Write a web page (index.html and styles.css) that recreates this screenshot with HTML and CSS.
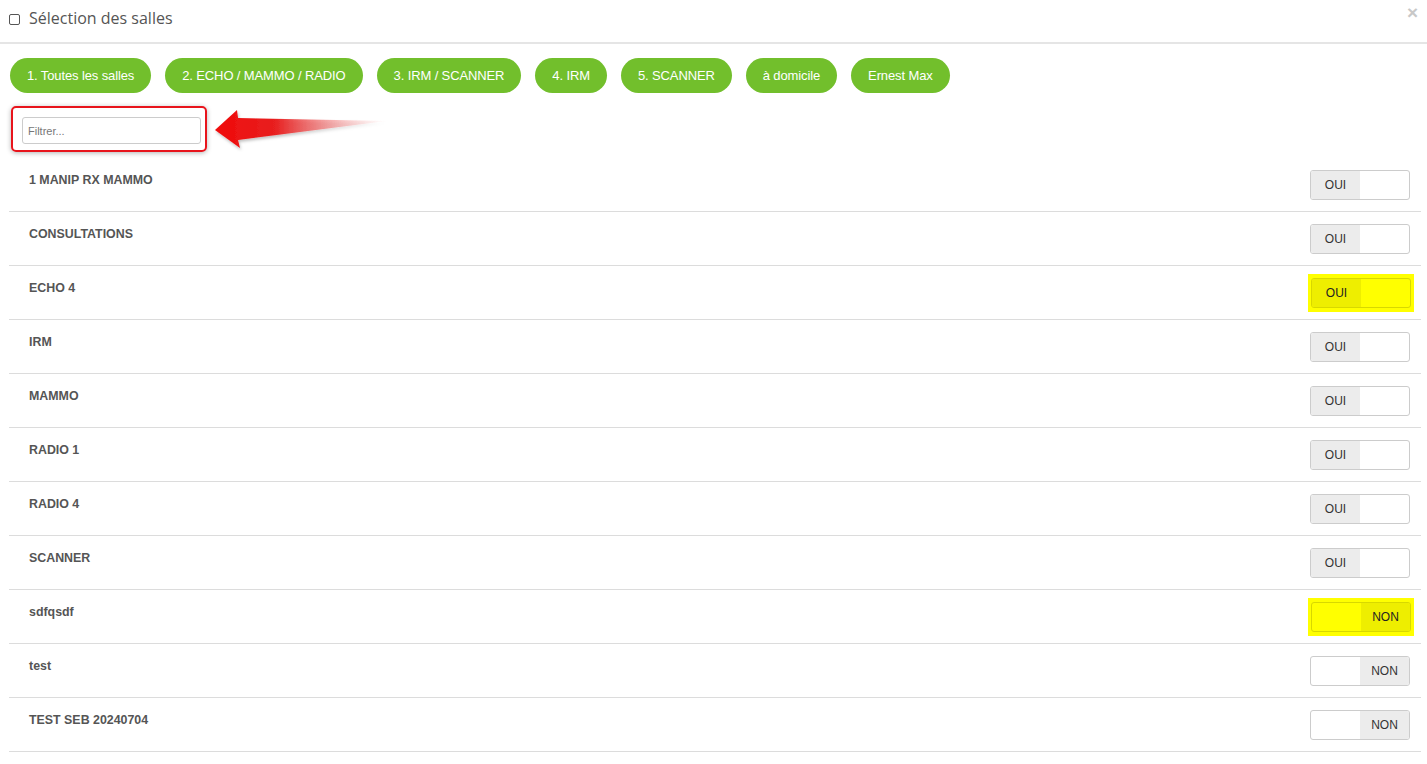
FILE: index.html
```html
<!DOCTYPE html>
<html lang="fr">
<head>
  <meta charset="utf-8">
  <title>Sélection des salles</title>
  <link rel="stylesheet" href="styles.css">
</head>
<body>
  <div class="modal">
    <header class="modal-header">
      <span class="check-icon"></span>
      <h4 class="modal-title">Sélection des salles</h4>
      <span class="close">&times;</span>
    </header>

    <div class="modal-body">
      <nav class="groups">
        <button class="group">1. Toutes les salles</button>
        <button class="group">2. ECHO / MAMMO / RADIO</button>
        <button class="group">3. IRM / SCANNER</button>
        <button class="group">4. IRM</button>
        <button class="group">5. SCANNER</button>
        <button class="group">à domicile</button>
        <button class="group">Ernest Max</button>
      </nav>

      <section class="filter">
        <div class="filter-box">
          <input type="text" placeholder="Filtrer...">
        </div>
        <svg class="arrow" width="190" height="50" viewBox="0 0 190 50">
          <defs>
            <linearGradient id="arrowGrad" x1="0" y1="0" x2="1" y2="0">
              <stop offset="0" stop-color="#f00a0a"/>
              <stop offset="0.35" stop-color="#e82020"/>
              <stop offset="1" stop-color="#f4a0a0" stop-opacity="0"/>
            </linearGradient>
            <filter id="arrowShadow" x="-10%" y="-30%" width="130%" height="160%">
              <feDropShadow dx="1" dy="2" stdDeviation="1.5" flood-color="#000" flood-opacity="0.25"/>
            </filter>
          </defs>
          <path d="M3 26 L25 6 L26 14 L175 17 L26 36 L28 44 Z" fill="url(#arrowGrad)" filter="url(#arrowShadow)"/>
        </svg>
      </section>

      <ul class="rooms">
        <li class="room"><span class="room-name">1 MANIP RX MAMMO</span><div class="switch"><span class="on">OUI</span><span></span></div></li>
        <li class="room"><span class="room-name">CONSULTATIONS</span><div class="switch"><span class="on">OUI</span><span></span></div></li>
        <li class="room"><span class="room-name">ECHO 4</span><div class="mark"><div class="switch"><span class="on">OUI</span><span></span></div></div></li>
        <li class="room"><span class="room-name">IRM</span><div class="switch"><span class="on">OUI</span><span></span></div></li>
        <li class="room"><span class="room-name">MAMMO</span><div class="switch"><span class="on">OUI</span><span></span></div></li>
        <li class="room"><span class="room-name">RADIO 1</span><div class="switch"><span class="on">OUI</span><span></span></div></li>
        <li class="room"><span class="room-name">RADIO 4</span><div class="switch"><span class="on">OUI</span><span></span></div></li>
        <li class="room"><span class="room-name">SCANNER</span><div class="switch"><span class="on">OUI</span><span></span></div></li>
        <li class="room"><span class="room-name">sdfqsdf</span><div class="mark"><div class="switch"><span></span><span class="on">NON</span></div></div></li>
        <li class="room"><span class="room-name">test</span><div class="switch"><span></span><span class="on">NON</span></div></li>
        <li class="room"><span class="room-name">TEST SEB 20240704</span><div class="switch"><span></span><span class="on">NON</span></div></li>
      </ul>
    </div>
  </div>
</body>
</html>
```

FILE: styles.css
```css
body {
  margin: 0;
  background: #fff;
  font-family: "Liberation Sans", Arial, sans-serif;
  color: #555;
}

.modal-header {
  display: flex;
  align-items: center;
  height: 42px;
  padding: 0 9px;
  border-bottom: 2px solid #e5e5e5;
  position: relative;
}
.check-icon {
  width: 9px; height: 9px;
  border: 1.5px solid #555;
  border-radius: 2px;
  margin: 0 9px 0 0;
  position: relative; top: -2px;
}
.modal-title {
  margin: 0;
  font-family: "Open Sans", sans-serif;
  font-weight: normal;
  font-size: 16px;
  color: #555;
  position: relative; top: -3px;
}
.close {
  position: absolute; top: 2px; right: 9px;
  font-size: 19px; font-weight: bold;
  color: #c8c8c8;
}

.modal-body {padding: 0 6px 0 9px;}

.groups {
  display: flex;
  gap: 14px;
  padding: 14px 0 0 1px;
}
.group {
  height: 35px;
  padding: 0 17px;
  border: none;
  border-radius: 18px;
  background: #72bf2c;
  color: #fff;
  font-family: "Liberation Sans", Arial, sans-serif;
  font-size: 13px;
  letter-spacing: -0.12px;
}

.filter {
  position: relative;
  padding: 13px 0 6px 2px;
}
.filter-box {
  width: 179px;
  padding: 9px 4px 6px 9px;
  border: 2px solid #e8141c;
  border-radius: 5px;
  box-shadow: 0 1px 5px rgba(0,0,0,0.3);
}
.filter-box input {
  display: block;
  box-sizing: border-box;
  width: 179px; height: 27px;
  padding: 0 5px;
  border: 1px solid #ccc;
  border-radius: 3px;
  font-family: "Liberation Sans", Arial, sans-serif;
  font-size: 11px;
  color: #555;
}
.filter-box input::placeholder {color: #777;}
.arrow {
  position: absolute; top: 11px; left: 203px;
}

.rooms {
  list-style: none;
  margin: 0; padding: 0;
}
.room {
  display: flex;
  justify-content: space-between;
  align-items: flex-start;
  padding: 12px 11px 11px 20px;
  border-bottom: 1px solid #dcdcdc;
}
.room-name {
  margin-top: 3px;
  font-size: 12.4px;
  line-height: 14px;
  font-weight: bold;
  color: #555;
}

.switch {
  display: flex;
  box-sizing: border-box;
  width: 100px; height: 30px;
  border: 1px solid #ccc;
  border-radius: 3px;
  overflow: hidden;
  background: #fff;
}
.switch span {
  flex: 1;
  display: flex; align-items: center; justify-content: center;
  font-size: 12px;
  color: #333;
}
.switch .on {background: #ececec;}

.mark {
  margin: -4px;
  padding: 4px 3px 4px 3px;
  background: #ffff00;
}
.mark .switch {
  background: #ffff00;
  border-color: #d8d800;
}
.mark .switch .on {background: #eeee00; color: #222;}
```
